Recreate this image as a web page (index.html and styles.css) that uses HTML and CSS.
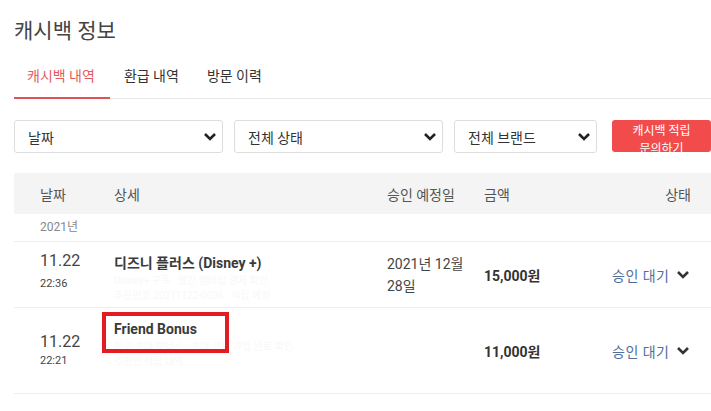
FILE: index.html
```html
<!DOCTYPE html>
<html lang="ko">
<head>
    <meta charset="UTF-8">
    <meta name="viewport" content="width=device-width, initial-scale=1.0">
    <title>캐시백 정보</title>
    <link rel="stylesheet" href="styles.css">
</head>
<body>
    <div class="page">
        <h1 class="title">캐시백 정보</h1>

        <div class="tabs">
            <a class="tab active">캐시백 내역</a>
            <a class="tab">환급 내역</a>
            <a class="tab">방문 이력</a>
        </div>

        <div class="filters">
            <div class="select wide">
                <span>날짜</span>
                <svg width="14" height="10" viewBox="0 0 14 10"><polyline points="2,2 7,7 12,2" fill="none" stroke="#222" stroke-width="2.6"/></svg>
            </div>
            <div class="select wide">
                <span>전체 상태</span>
                <svg width="14" height="10" viewBox="0 0 14 10"><polyline points="2,2 7,7 12,2" fill="none" stroke="#222" stroke-width="2.6"/></svg>
            </div>
            <div class="select brand">
                <span>전체 브랜드</span>
                <svg width="14" height="10" viewBox="0 0 14 10"><polyline points="2,2 7,7 12,2" fill="none" stroke="#222" stroke-width="2.6"/></svg>
            </div>
            <button class="ask">캐시백 적립<br>문의하기</button>
        </div>

        <div class="table">
            <div class="row head">
                <div class="c-date">날짜</div>
                <div>상세</div>
                <div>승인 예정일</div>
                <div>금액</div>
                <div class="c-state-head">상태</div>
            </div>

            <div class="year">2021년</div>

            <div class="row item first">
                <div class="c-date center">
                    <div class="day">11.22</div>
                    <div class="time">22:36</div>
                </div>
                <div class="detail">
                    <div class="name">디즈니 플러스 (Disney +)</div>
                    <div class="blur">Disney+ 구독 · 월간 멤버십 결제 확인</div>
                    <div class="blur">주문번호 20211122-0036 · 적립 예정</div>
                </div>
                <div class="center paydate">2021년 12월<br>28일</div>
                <div class="center amount">15,000원</div>
                <div class="center state">승인 대기
                    <svg width="14" height="10" viewBox="0 0 14 10"><polyline points="2,2 7,7 12,2" fill="none" stroke="#333" stroke-width="2.6"/></svg>
                </div>
            </div>

            <div class="row item second">
                <div class="c-date center">
                    <div class="day">11.22</div>
                    <div class="time">22:21</div>
                </div>
                <div class="detail">
                    <div class="name"><span class="mark">Friend Bonus</span></div>
                    <div class="blur">친구 초대 보너스 · 초대 코드 가입 완료 확인</div>
                    <div class="blur">추천인 적립 내역</div>
                </div>
                <div class="center paydate"></div>
                <div class="center amount">11,000원</div>
                <div class="center state">승인 대기
                    <svg width="14" height="10" viewBox="0 0 14 10"><polyline points="2,2 7,7 12,2" fill="none" stroke="#333" stroke-width="2.6"/></svg>
                </div>
            </div>
        </div>
    </div>
</body>
</html>
```

FILE: styles.css
```css
body {
    margin: 0;
    background: #fff;
    font-family: Roboto, "Noto Sans CJK KR", sans-serif;
    color: #333;
    overflow: hidden;
}

.page {
    padding: 17px 0 0 14px;
}

.title {
    margin: 0;
    font-size: 21px;
    font-weight: 400;
    line-height: 28px;
    color: #444;
}

.tabs {
    display: flex;
    margin-top: 11px;
    border-bottom: 1px solid #e6e6e6;
}

.tab {
    font-size: 14px;
    line-height: 41px;
    padding: 0 14px;
    color: #333;
    border-bottom: 2px solid transparent;
    margin-bottom: -1px;
}

.tab.active {
    color: #e45a60;
    border-bottom-color: #e0525a;
    padding: 0 15px 0 13px;
}

.filters {
    display: flex;
    align-items: flex-start;
    gap: 11px;
    margin-top: 21px;
}

.select {
    height: 33px;
    box-sizing: border-box;
    border: 1px solid #ddd;
    border-radius: 3px;
    display: flex;
    align-items: center;
    justify-content: space-between;
    padding: 0 5px 0 13px;
    font-size: 14px;
    color: #333;
}

.select.wide {
    width: 209px;
}

.select.brand {
    width: 143px;
}

.ask {
    margin-left: 4px;
    width: 99px;
    height: 32px;
    border: none;
    border-radius: 3px;
    background: #f24b4b;
    color: #fff;
    font-family: inherit;
    font-size: 12px;
    line-height: 18px;
    padding: 2px 0 0;
    overflow: hidden;
    display: block;
    text-align: center;
}

.table {
    margin-top: 20px;
}

.row {
    display: grid;
    grid-template-columns: 100px 273px 97px 128px 1fr;
}

.row > div:first-child {
    padding-left: 26px;
}

.head {
    background: #f4f4f4;
    height: 41px;
    align-items: center;
    font-size: 14px;
    color: #555;
}

.c-state-head {
    text-align: right;
    padding-right: 20px;
}

.year {
    padding-left: 26px;
    height: 28px;
    line-height: 27px;
    font-size: 12px;
    color: #888;
    border-bottom: 1px solid #eee;
    box-sizing: border-box;
}

.item {
    border-bottom: 1px solid #eee;
    box-sizing: border-box;
}

.item.first {
    height: 66px;
}

.item.second {
    height: 86px;
}

.center {
    align-self: center;
}

.day {
    font-size: 16px;
    line-height: 20px;
    color: #444;
}

.time {
    font-size: 11px;
    line-height: 16px;
    margin-top: 5px;
    color: #444;
}

.first .c-date {
    margin-top: -6px;
}

.second .time {
    margin-top: 1px;
}

.detail {
    padding-top: 11px;
}

.name {
    font-size: 14px;
    font-weight: 700;
    line-height: 20px;
    color: #3a3a3a;
}

.blur {
    font-size: 10px;
    line-height: 15px;
    color: #f8f8f8;
    white-space: nowrap;
}

.second .blur:first-of-type {
    margin-top: 12px;
}

.mark {
    position: relative;
}

.mark::after {
    content: "";
    position: absolute;
    left: -12px;
    top: -9px;
    width: 127px;
    height: 41px;
    box-sizing: border-box;
    border: 4px solid #e31b23;
}

.paydate {
    font-size: 14px;
    line-height: 22px;
    color: #444;
}

.amount {
    font-size: 14px;
    font-weight: 700;
    color: #333;
}

.state {
    font-size: 14px;
    letter-spacing: 0.5px;
    color: #4e6f9c;
    display: flex;
    align-items: center;
    gap: 6px;
}
```
